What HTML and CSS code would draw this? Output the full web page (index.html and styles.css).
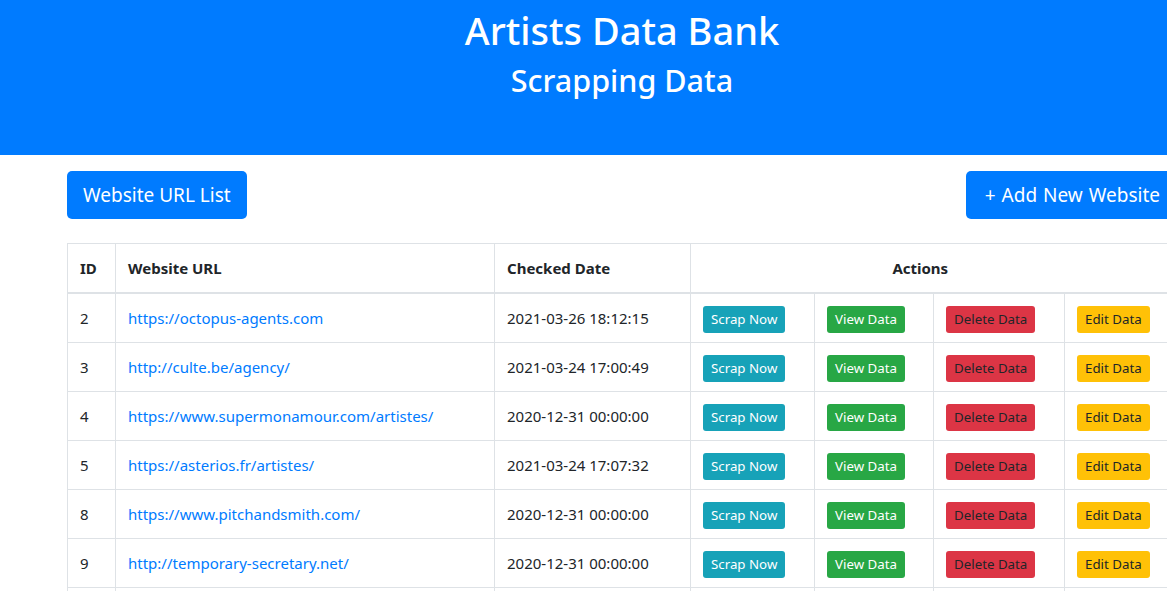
FILE: index.html
```html
<!DOCTYPE html>
<html>
<head>
<meta charset="utf-8">
<title>Artists Data Bank</title>
<link rel="stylesheet" href="styles.css">
</head>
<body>
<div class="page">
  <header class="hero">
    <h1 class="hero-title">Artists Data Bank</h1>
    <h2 class="hero-sub">Scrapping Data</h2>
  </header>
  <main class="container">
    <div class="toolbar">
      <a class="btn-lg" href="#">Website URL List</a>
      <a class="btn-lg btn-add" href="#">+ Add New Website</a>
    </div>
    <table class="data-table">
      <colgroup>
        <col class="c-id"><col class="c-url"><col class="c-date">
        <col class="c-a1"><col class="c-a2"><col class="c-a3"><col class="c-a4">
      </colgroup>
      <thead>
        <tr><th>ID</th><th>Website URL</th><th>Checked Date</th><th colspan="4" class="th-actions">Actions</th></tr>
      </thead>
      <tbody>
        <tr><td>2</td><td><a href="#">https://octopus-agents.com</a></td><td>2021-03-26 18:12:15</td>
          <td><a class="btn-sm info" href="#">Scrap Now</a></td><td><a class="btn-sm success" href="#">View Data</a></td><td><a class="btn-sm danger" href="#">Delete Data</a></td><td><a class="btn-sm warning" href="#">Edit Data</a></td></tr>
        <tr><td>3</td><td><a href="#">http://culte.be/agency/</a></td><td>2021-03-24 17:00:49</td>
          <td><a class="btn-sm info" href="#">Scrap Now</a></td><td><a class="btn-sm success" href="#">View Data</a></td><td><a class="btn-sm danger" href="#">Delete Data</a></td><td><a class="btn-sm warning" href="#">Edit Data</a></td></tr>
        <tr><td>4</td><td><a href="#">https://www.supermonamour.com/artistes/</a></td><td>2020-12-31 00:00:00</td>
          <td><a class="btn-sm info" href="#">Scrap Now</a></td><td><a class="btn-sm success" href="#">View Data</a></td><td><a class="btn-sm danger" href="#">Delete Data</a></td><td><a class="btn-sm warning" href="#">Edit Data</a></td></tr>
        <tr><td>5</td><td><a href="#">https://asterios.fr/artistes/</a></td><td>2021-03-24 17:07:32</td>
          <td><a class="btn-sm info" href="#">Scrap Now</a></td><td><a class="btn-sm success" href="#">View Data</a></td><td><a class="btn-sm danger" href="#">Delete Data</a></td><td><a class="btn-sm warning" href="#">Edit Data</a></td></tr>
        <tr><td>8</td><td><a href="#">https://www.pitchandsmith.com/</a></td><td>2020-12-31 00:00:00</td>
          <td><a class="btn-sm info" href="#">Scrap Now</a></td><td><a class="btn-sm success" href="#">View Data</a></td><td><a class="btn-sm danger" href="#">Delete Data</a></td><td><a class="btn-sm warning" href="#">Edit Data</a></td></tr>
        <tr><td>9</td><td><a href="#">http://temporary-secretary.net/</a></td><td>2020-12-31 00:00:00</td>
          <td><a class="btn-sm info" href="#">Scrap Now</a></td><td><a class="btn-sm success" href="#">View Data</a></td><td><a class="btn-sm danger" href="#">Delete Data</a></td><td><a class="btn-sm warning" href="#">Edit Data</a></td></tr>
        <tr class="row-empty"><td></td><td></td><td></td><td></td><td></td><td></td><td></td></tr>
      </tbody>
    </table>
  </main>
</div>
</body>
</html>
```
FILE: styles.css
```css
html, body {
  margin: 0;
  padding: 0;
  overflow: hidden;
}
body {
  font-family: "Noto Sans", "Open Sans", sans-serif;
  font-size: 16px;
  line-height: 1.5;
  color: #212529;
  background: #fff;
}
.page {
  width: 1244px;
}
.hero {
  background: #007bff;
  color: #fff;
  text-align: center;
  height: 155px;
  box-sizing: border-box;
  padding-top: 8px;
}
.hero-title {
  margin: 0;
  font-size: 38px;
  font-weight: 500;
  line-height: 1.2;
}
.hero-sub {
  margin: 8px 0 0;
  font-size: 30.5px;
  font-weight: 500;
  line-height: 1.2;
}
.container {
  width: 1110px;
  margin: 0 auto;
  padding-top: 16px;
}
.toolbar {
  display: flex;
  justify-content: space-between;
  margin-bottom: 24px;
}
.btn-lg {
  display: inline-block;
  background: #007bff;
  color: #fff;
  text-decoration: none;
  font-size: 19px;
  line-height: 30px;
  padding: 9px 16px;
  border-radius: 5px;
}
.btn-add {
  padding-left: 19px;
  margin-right: 1px;
  word-spacing: 1px;
}
.data-table {
  width: 1110px;
  border-collapse: collapse;
  table-layout: fixed;
}
.c-id { width: 48px; }
.c-url { width: 379px; }
.c-date { width: 196px; }
.c-a1 { width: 124px; }
.c-a2 { width: 119px; }
.c-a3 { width: 131px; }
.c-a4 { width: 113px; }
.data-table th,
.data-table td {
  border: 1px solid #dee2e6;
  padding: 12px;
  text-align: left;
  vertical-align: top;
  white-space: nowrap;
  font-size: 15px;
  line-height: 24px;
}
.data-table th {
  font-weight: 700;
  border-bottom-width: 2px;
}
.data-table th.th-actions {
  text-align: center;
  padding-right: 40px;
}
.data-table tr > :last-child {
  border-right: none;
}
.data-table .row-empty td {
  height: 24px;
}
.data-table a {
  color: #007bff;
  text-decoration: none;
}
.data-table .btn-sm {
  display: inline-block;
  vertical-align: top;
  height: 27px;
  line-height: 27px;
  margin-bottom: -3px;
  padding: 0 8px;
  font-size: 13.3px;
  border-radius: 3px;
  color: #fff;
}
.btn-sm.info { background: #17a2b8; color: #fff; }
.btn-sm.success { background: #28a745; color: #fff; }
.btn-sm.danger { background: #dc3545; color: #212529; }
.btn-sm.warning { background: #ffc107; color: #212529; }
```
